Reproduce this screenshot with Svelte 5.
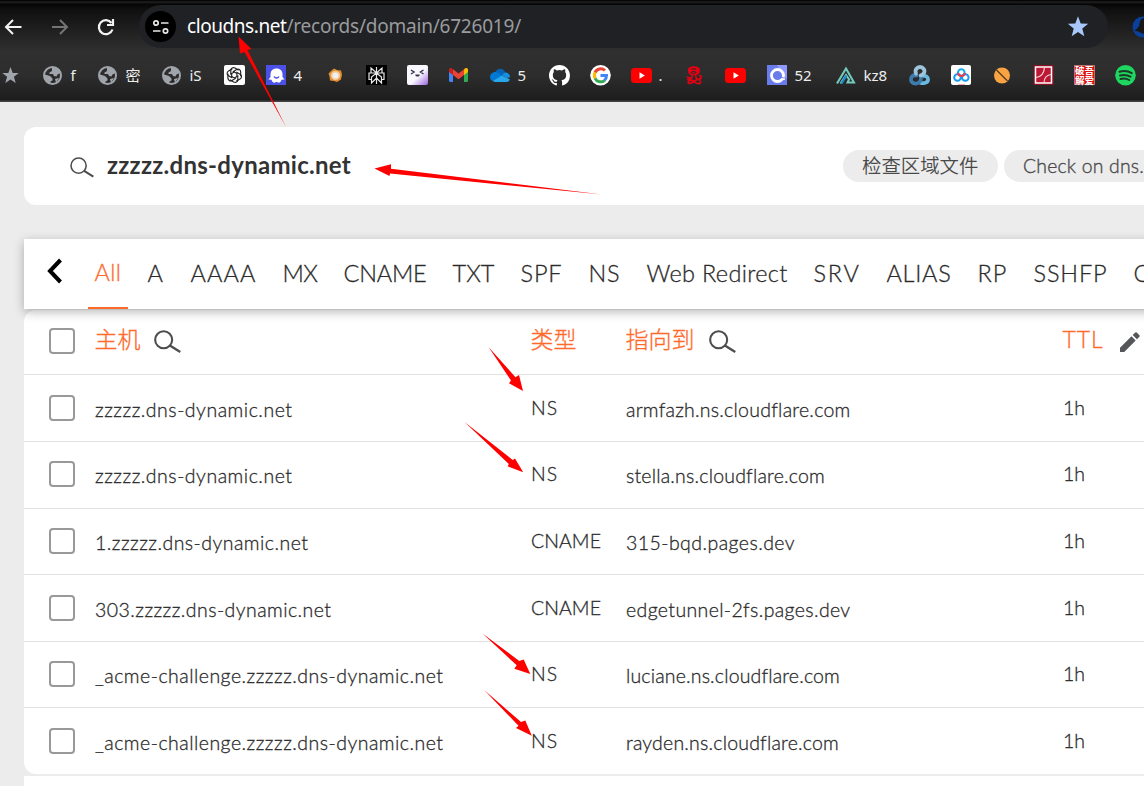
<script>
  // Spreads a label over its intended advance width through letter spacing.
  function fit(node, width) {
    const natural = node.getBoundingClientRect().width;
    const count = [...node.textContent].length;
    node.style.letterSpacing = `${(width - natural) / count}px`;
  }

  const bookmarks = [
    { icon: 'star', w: 42 },
    { icon: 'globe', w: 55, label: 'f' },
    { icon: 'globe', w: 64, label: '密' },
    { icon: 'globe', w: 62, label: 'iS' },
    { icon: 'gpt', w: 42 },
    { icon: 'ghost', w: 59, label: '4' },
    { icon: 'flower', w: 41 },
    { icon: 'weave', w: 41 },
    { icon: 'face', w: 41 },
    { icon: 'gmail', w: 42 },
    { icon: 'cloud', w: 59, label: '5' },
    { icon: 'github', w: 41 },
    { icon: 'google', w: 41 },
    { icon: 'youtube', w: 54, label: '.' },
    { icon: 'octopus', w: 40 },
    { icon: 'youtube', w: 42 },
    { icon: 'ring', w: 69, label: '52' },
    { icon: 'tri', w: 73, label: 'kz8' },
    { icon: 'knot', w: 42 },
    { icon: 'pan', w: 41 },
    { icon: 'pill', w: 41 },
    { icon: 'court', w: 41 },
    { icon: 'seal', w: 41 },
    { icon: 'spotify', w: 30 },
  ];

  const tabs = [
    ['All', 27], ['A', 17], ['AAAA', 66], ['MX', 35], ['CNAME', 83], ['TXT', 42],
    ['SPF', 42], ['NS', 32], ['Web Redirect', 141], ['SRV', 47], ['ALIAS', 65],
    ['RP', 30], ['SSHFP', 74], ['C', 17],
  ];

  const records = [
    ['zzzzz.dns-dynamic.net', 197.5, 'NS', 27, 'armfazh.ns.cloudflare.com', 224.5],
    ['zzzzz.dns-dynamic.net', 197.5, 'NS', 27, 'stella.ns.cloudflare.com', 199],
    ['1.zzzzz.dns-dynamic.net', 213.5, 'CNAME', 70, '315-bqd.pages.dev', 169],
    ['303.zzzzz.dns-dynamic.net', 236.5, 'CNAME', 70, 'edgetunnel-2fs.pages.dev', 224.5],
    ['_acme-challenge.zzzzz.dns-dynamic.net', 348.5, 'NS', 27, 'luciane.ns.cloudflare.com', 214],
    ['_acme-challenge.zzzzz.dns-dynamic.net', 348.5, 'NS', 27, 'rayden.ns.cloudflare.com', 213],
  ];

  const arrows = [
    '238.5,36.5 240,53.5 244.5,52 286,127 247.5,50 251.5,49',
    '374.5,168.5 391,164.3 391,168.7 602,194.5 390,173.6 389.5,176',
    '523,391 519,375 515.5,377.2 488.5,347 511,380.5 509,383.3',
    '523.2,472.3 515,458.5 512.7,460 464.5,422 508.8,464 507.7,466.3',
    '530.3,674 523.7,659.5 519.3,661 482.5,633.5 516.7,665.3 514.3,668.8',
    '531.8,735.7 525.3,720.5 521,722 484.2,690 518.5,725.8 516,728',
  ];
</script>

{#snippet magnifier(size)}
  <svg class="mag" width={size} height={size * 0.86} viewBox="0 0 26 22" fill="none" stroke="#4d4d4f">
    <circle cx="9.3" cy="9.2" r="8.2" stroke-width="2" />
    <path d="M15.3 14.8 25.3 21" stroke-width="2.2" />
  </svg>
{/snippet}

{#snippet glyph(name)}
  <svg class="glyph" width="20" height="20" viewBox="0 0 20 20" fill="none">
    {#if name === 'star'}
      <path fill="#a0a4ab" d="m9.500 2 2.200 6h6l-4.800 3.800 1.800 6.200-5.200-3.600L4.300 18l1.800-6.200L1.300 8h6z" />
    {:else if name === 'globe'}
      <circle cx="9.500" cy="10.500" r="8.500" stroke="#a0a4ab" stroke-width="2" />
      <path fill="#a0a4ab" d="M9 2c4 0 7 2 8.500 6l-3 1.500-1 2-2.500-.5-1-2H6.500V7.500L9 6zM2 9.500l5 1.500 2.500 2.500v2l-2 1V19C4 18 1 14 2 9.500zM12 14l4-1-3 5z" />
    {:else if name === 'gpt'}
      <rect width="21" height="20" rx="2" fill="#fff" />
      <g stroke="#222" stroke-width="1.150">
        {#each [0, 60, 120, 180, 240, 300] as a}
          <path transform="rotate({a} 10.300 10)" d="M10.300 7 6.800 9V5.300C6.800 3 9 2 11 3l3.600 2.200" />
        {/each}
      </g>
    {:else if name === 'ghost'}
      <rect width="20" height="20" fill="#4b50e6" />
      <path fill="#fff" d="M10.500 3.500c4 0 6 2.500 6 6v2.500l2 2.500-3 .2c-.5 2-1.500 3-3 3l-2-1-2 1c-1.500 0-2.500-1-3-3l-3-.2 2-2.500V9.500c0-3.500 2-6 6-6z" />
      <path stroke="#4b50e6" stroke-width="1.300" d="M8 11.500c1 2 4 2 5 0" />
    {:else if name === 'flower'}
      <path fill="#e48d2d" d="m9 3.500 3 1.500 4 .5 1 4-1 5-4 2.500-3-1-4-.5-.5-4-1-3L6 6z" />
      <circle cx="10.500" cy="10.500" r="4.700" fill="#f4c999" /><circle cx="10.500" cy="10.500" r="3" fill="#eef0f2" />
    {:else if name === 'weave'}
      <rect width="21" height="20" fill="#000" />
      <path stroke="#e8e8e8" stroke-width="1.200" d="M10.500 2v17M5 3l5.500 5L16 3v5H5zM5 8H3v6.500h2.500V12l5-4 5 4v2.500H18V8h-2M5.500 14v4l5-5 5 5v-4" />
    {:else if name === 'face'}
      <defs><linearGradient id="fg" x1="0" y1="0" x2="1" y2="1"><stop offset=".55" stop-color="#faf8ff" /><stop offset="1" stop-color="#9a64e0" /></linearGradient></defs>
      <rect width="21" height="20" rx="2" fill="url(#fg)" />
      <path stroke="#34354d" stroke-width="1.500" d="m4 5 3 2-3 2M16.500 5l-3 2 3 2M9 9.500c0 1.500 1.500 1.500 1.500 0 0 1.500 1.500 1.500 1.500 0" />
    {:else if name === 'gmail'}
      <path fill="#4285f4" d="M1 6v9.500A1.500 1.500 0 0 0 2.500 17H5V9z" /><path fill="#34a853" d="M20 6v9.500a1.500 1.500 0 0 1-1.500 1.500H16V9z" />
      <path fill="#c5221f" d="M1 7V5c0-2 2-2.500 3.500-1.300L5 4.200V10z" /><path fill="#fbbc04" d="M20 7V5c0-2-2-2.500-3.500-1.300l-.5.500V10z" />
      <path fill="#ea4335" d="m5 4.200 5.500 4.300L16 4.200V10l-5.500 4.300L5 10z" />
    {:else if name === 'cloud'}
      <path fill="#0364b8" d="M5 7.500C7 2.500 13 2.500 15 7l-3 5-8-3z" /><path fill="#0078d4" d="M4.500 7C1.500 7.500 0 9.500 0 12c0 2 1 3.200 2.500 4L13 11 8.500 8c-1.300-.8-2.600-1-4-1z" />
      <path fill="#1490df" d="M14.800 7.500c2.700-.2 5.200 1.500 5.200 4.700L17 13l-5-3z" /><path fill="#28a8ea" d="m2.500 16 9.500-5.500 8 4c-.7 1.700-2 2.500-4 2.500H5z" />
    {:else if name === 'github'}
      <g transform="scale(1.310)"><path fill="#fff" d="M8 0C3.580 0 0 3.580 0 8c0 3.540 2.290 6.530 5.470 7.590.4.070.55-.17.55-.38 0-.19-.01-.82-.01-1.490-2.010.37-2.530-.49-2.690-.94-.09-.23-.48-.94-.82-1.130-.28-.15-.68-.52-.01-.53.63-.01 1.080.58 1.230.82.72 1.210 1.870.87 2.330.66.070-.52.28-.87.51-1.070-1.780-.2-3.640-.89-3.640-3.950 0-.87.31-1.590.82-2.150-.08-.2-.36-1.020.08-2.120 0 0 .67-.21 2.200.82a7.600 7.600 0 0 1 4 0c1.530-1.040 2.200-.82 2.200-.82.44 1.100.16 1.920.08 2.120.51.56.82 1.270.82 2.150 0 3.070-1.870 3.750-3.650 3.950.29.25.54.73.54 1.480 0 1.070-.01 1.930-.01 2.200 0 .21.15.46.55.38A8.010 8.010 0 0 0 16 8c0-4.420-3.580-8-8-8z" /></g>
    {:else if name === 'google'}
      <circle cx="10.500" cy="10.300" r="10.300" fill="#fff" />
      <g stroke-width="3"><path stroke="#ea4335" d="M5 7.500a6.300 6.300 0 0 1 10-2" /><path stroke="#fbbc05" d="M5.200 13.500a6.500 6.500 0 0 1 0-6.200" /><path stroke="#34a853" d="M5 13.300a6.300 6.300 0 0 0 9.800 2" /><path stroke="#4285f4" d="M10.500 10.500h6c0 2-.7 3.500-2 4.800" /></g>
    {:else if name === 'youtube'}
      <rect y="3" width="21" height="15" rx="3.500" fill="#f00" /><path fill="#fff" d="m8.500 7.300 5.300 3.200-5.300 3.200z" />
    {:else if name === 'octopus'}
      <path fill="#e60012" d="M3 4.500C3 2.500 5 1.200 8.500 1.200s6.500 1.300 6.500 4.300-2 4-3.500 4.500h-5C4 9.500 3 8 3 6.500z" />
      <path stroke="#e60012" stroke-width="1.700" d="M7 10v2.500c0 1.500-5 0-5-1M10.500 10c0 3 1.500 5 5.500 4.500M14 10.500c3 0 3 3 0 3.500-4 .5-6 4.500-9 4.500-2 0-2.500-1.500-1-2.500 3-2 5-.5 6.500 1.500 1.500 1.500 5 1.500 5 0s-1-1.500-1-1.500M2 14.500h3l3 1" />
      <path stroke="#2c2c2c" d="M6.500 4h4.500M6 7.500c0-1.500 5-1.500 5 0-1 1-4 1-5 0" />
    {:else if name === 'ring'}
      <rect width="20" height="20" fill="#687cec" /><path fill="#8f9aff" d="M20 0v14l-6-5-4-9z" />
      <circle cx="10.500" cy="10.500" r="6" stroke="#fff" stroke-width="2.800" /><path stroke="#687cec" stroke-width="1.200" d="m13 12 5 1.500" /><path stroke="#fff" stroke-width="1.500" d="m14 14.500 4-.5" />
    {:else if name === 'tri'}
      <path stroke="#75cbbd" stroke-width="2" d="M1 18.500 10 3.500l8 14h-6.500l2-4M4.500 18.500 10 10l3.500 5" /><path stroke="#1d8bd1" stroke-width="2.300" d="m5.500 18.500 4.800-8" />
    {:else if name === 'knot'}
      <g stroke-width="3.800" stroke-linecap="round"><path stroke="#67b9df" d="M11 17.500c3 1.500 8.500.5 8-3.500-.3-2.500-2.500-3.500-5-3" /><path stroke="#3d7bad" d="M7.500 10.500C4 9.500 1.500 12 2 15c.6 4 6 4.500 8.500 2 1-1 1.500-2.500 1.500-4" /><path stroke="#9dc4dc" d="M7 8.500C5.500 5 8 2 11 2s5.500 3 4 6c-.7 1.300-2 2-3.500 2.500" /></g>
    {:else if name === 'pan'}
      <rect width="20" height="20" rx="2" fill="#fff" />
      <g stroke-width="2"><circle cx="10.300" cy="7.500" r="3.300" stroke="#14a9f2" /><circle cx="6.500" cy="12.500" r="3.300" stroke="#159bee" /><circle cx="14.300" cy="12.500" r="3.300" stroke="#159bee" /><path stroke="#f2384b" d="M7 8c.5 2 2 3 3.500 3S13.500 10 14 8" /></g>
      <path stroke="#f2a6ad" d="M7 19.500h7" />
    {:else if name === 'pill'}
      <circle cx="10" cy="10.500" r="8" fill="#f9a343" /><path stroke="#49321e" stroke-width="1.100" d="m4.500 5 11 11" />
    {:else if name === 'court'}
      <rect x=".5" width="20" height="20" fill="#8f1024" /><rect x="2.500" y="2" width="16" height="16" fill="#bd1733" stroke="#fff" stroke-width="1.500" />
      <path stroke="#f3d5da" stroke-width="1.200" d="M3 12.500c5-.5 8-4.500 8.500-10M11 18c0-5 2.500-8 7.500-8.500" />
    {:else if name === 'seal'}
      <rect x=".5" y=".5" width="20" height="19" fill="#df1010" stroke="#f5c0bd" stroke-dasharray="1 1" />
      <text><tspan x="1" y="9">破吾</tspan><tspan x="1" y="18.500">解爱</tspan></text>
    {:else if name === 'spotify'}
      <circle cx="10.500" cy="10.300" r="10.300" fill="#1ed760" />
      <path stroke="#1d3826" stroke-width="2" stroke-linecap="round" d="M4.500 6.800c4-1.200 8.500-.8 12.300 1.300M5 10.500c3.500-1 7.300-.6 10.500 1.200M5.500 14c3-.8 6-.5 8.700 1" />
    {/if}
  </svg>
{/snippet}

<div class="screen">
  <header class="browser">
    <div class="nav">
      <svg class="back" width="20" height="20" viewBox="0 0 20 20" fill="none" stroke="#f2f2f2" stroke-width="2"><path d="M19.500 10H5M11 3l-7 7 7 7" /></svg>
      <svg class="fwd" width="20" height="20" viewBox="0 0 20 20" fill="none" stroke="#747474" stroke-width="2"><path d="M2 10h14.500M10 3l7 7-7 7" /></svg>
      <svg class="reload" width="20" height="20" viewBox="0 0 20 20" fill="none" stroke="#f2f2f2" stroke-width="2.200"><path d="M16.500 12.500A7 7 0 1 1 15.500 6M17 2v6h-6" /></svg>
      <div class="omnibox">
        <div class="tune">
          <svg width="18" height="16" viewBox="0 0 18 16" fill="none" stroke="#e8e8e8" stroke-width="1.700"><circle cx="4" cy="4" r="2.200" /><path d="M9 4h7.500M1 12h7.500" /><circle cx="13.500" cy="12" r="2.200" /></svg>
        </div>
        <span class="url"><b use:fit={99.5}>cloudns.net</b><span use:fit={234.5}>/records/domain/6726019/</span></span>
        <svg class="fav" width="22" height="21" viewBox="0 0 22 21" fill="#a8c7fa"><path d="m11 .3 2.700 7.100 7.500.3-5.900 4.700 2 7.800L11 16l-6.300 4.200 2-7.800L.8 7.700l7.500-.3z" /></svg>
      </div>
      <svg class="ext" width="22" height="22" viewBox="0 0 22 22"><circle cx="11" cy="11" r="10.500" fill="#0a409b" /><path fill="#171717" d="M12 2C7 3 8 7 7 10c-1 2-4 4-4 5 4 0 5 2 9 3z" /></svg>
    </div>
    <div class="marks">
      {#each bookmarks as b}
        <div class="mark" style:width="{b.w}px">
          {@render glyph(b.icon)}
          {#if b.label}<span>{b.label}</span>{/if}
        </div>
      {/each}
    </div>
  </header>

  <main>
    <section class="zone">
      {@render magnifier(24)}
      <h1><span use:fit={244}>zzzzz.dns-dynamic.net</span></h1>
      <span class="chip cjk">检查区域文件</span>
      <span class="chip en"><span use:fit={121}>Check on dns.</span></span>
    </section>

    <nav class="tabs">
      <svg class="prev" width="16" height="26" viewBox="0 0 16 26" fill="none" stroke="#000" stroke-width="4"><path d="M13.500 2 3 13l10.500 11" /></svg>
      {#each tabs as [name, w], i}
        <div class="tab" class:active={i === 0} style:width="{w + 13}px"><span use:fit={w}>{name}</span></div>
      {/each}
    </nav>

    <section class="table">
      <div class="row head">
        <i class="box"></i>
        <div>主机{@render magnifier(27)}</div>
        <div>类型</div>
        <div class="target">指向到{@render magnifier(27)}</div>
        <div class="ttl"><span use:fit={41}>TTL</span>
          <svg width="20" height="20" viewBox="0 0 20 20" fill="#55565a"><path d="M0 15.800 11.500 4.300l4.200 4.200L4.200 20H0zM12.700 3.100 15.300.6q.7-.7 1.400 0l2.700 2.700q.7.700 0 1.400l-2.500 2.600z" /></svg>
        </div>
      </div>
      {#each records as [host, hw, type, tw, target, gw]}
        <div class="row">
          <i class="box"></i>
          <div class="low"><span use:fit={hw}>{host}</span></div>
          <div><span use:fit={tw}>{type}</span></div>
          <div class="low"><span use:fit={gw}>{target}</span></div>
          <div class="time"><span use:fit={22}>1h</span></div>
        </div>
      {/each}
    </section>
    <div class="next"></div>
  </main>

  <svg class="arrows" width="1144" height="786" viewBox="0 0 1144 786" fill="#f00">
    {#each arrows as points}<polygon {points} />{/each}
  </svg>
</div>

<style>
  :global(body) { margin: 0; overflow: hidden; }
  .screen {
    position: relative; width: 1144px; height: 786px; overflow: hidden;
    background: #ececec; color: #2b2b2b; font-family: Lato, "Noto Sans CJK SC", sans-serif;
    font-weight: 300; display: flex; flex-direction: column;
  }
  svg { flex: none; display: block; }
  span { white-space: nowrap; }
  .browser {
    box-sizing: border-box; height: 102px; flex: none; padding-top: 5px; overflow: hidden;
    background: linear-gradient(#050505 0 1px, #191919 1px 3px, #050505 4px, #101010 10px, #303030 52px, #2d2d2d 75px, #1d1d1d 100px, #444 101px);
    font-family: "Noto Sans", "Noto Sans CJK SC", sans-serif; font-weight: 400;
  }
  .nav { height: 43px; display: flex; align-items: center; }
  .back { margin-left: 2px; }
  .fwd { margin-left: 28px; }
  .reload { margin-left: 26px; }
  .omnibox {
    box-sizing: border-box; flex: none; width: 969px; height: 43px; margin-left: 23px; padding: 0 19px 0 6px;
    border-radius: 22px; background: #202124; display: flex; align-items: center;
  }
  .tune { width: 31px; height: 31px; border-radius: 50%; background: #000; display: grid; place-items: center; }
  .url { flex: 1; margin: -2px 0 0 11px; font-size: 19px; color: #999b9e; display: flex; }
  .url b { font-weight: 400; color: #fff; }
  .ext { margin-left: 24px; }
  .marks { display: flex; height: 53px; align-items: center; padding-left: 1px; }
  .mark { flex: none; display: flex; align-items: center; gap: 7.500px; color: #eee; font-size: 15px; }
  .glyph { overflow: visible; }
  .glyph text { font: 700 9.500px "Noto Sans CJK SC", sans-serif; fill: #fff; }
  main { flex: 1; padding: 25px 0 0 24px; }
  .zone {
    box-sizing: border-box; width: 1180px; height: 78px; padding-left: 45.500px; border-radius: 12px;
    background: #fff; display: flex; align-items: center;
  }
  .zone .mag { margin-top: 3px; }
  .zone :global(circle) { stroke-width: 1.700; }
  h1 { margin: 0 0 2px 13.500px; width: 736px; flex: none; font-size: 24px; line-height: 30px; font-weight: 700; color: #333; }
  .chip {
    box-sizing: border-box; flex: none; height: 32px; padding: 0 19px; margin-right: 6px; border-radius: 16px;
    background: #ececec; color: #4a4a4a; font-size: 19.400px; line-height: 32px; width: 155px;
  }
  .chip.cjk { font-weight: 350; }
  .chip.en { width: 190px; -webkit-text-stroke: .35px; }
  .tabs {
    position: relative; z-index: 1; height: 70px; width: 1200px; margin-top: 34px; background: #fff;
    box-shadow: 0 3px 10px rgba(0, 0, 0, .28); display: flex; gap: 13px;
  }
  .prev { margin: 19px 24px 0 23px; }
  .tab {
    box-sizing: border-box; flex: none; height: 70px; padding-left: 6.500px; line-height: 69px;
    font-size: 23.500px; -webkit-text-stroke: .3px;
  }
  .tabs .prev + .tab { margin-left: -12px; }
  .active { color: #ff6a2b; border-bottom: 2px solid #ff6a2b; line-height: 67px; }
  .table { width: 1200px; height: 464px; margin-top: 1px; border-radius: 12px; background: #fff; }
  .row {
    box-sizing: border-box; height: 66.600px; display: grid; grid-template-columns: 46px 436px 95px 437px 1fr;
    align-items: center; padding: 0 0 1.800px 25px; border-top: 1px solid #e2e2e2; font-size: 19.500px;
    -webkit-text-stroke: .3px;
  }
  .head { height: 64.400px; border: 0; color: #ff6a2b; font-size: 23px; padding-bottom: 2px; }
  .head > div { display: flex; align-items: center; gap: 13px; line-height: 30px; margin: -4px 0 0 -.5px; }
  .head .target { gap: 14px; }
  .head .mag { margin-top: 5px; }
  .head .ttl { gap: 16px; }
  .ttl svg { margin-top: 5px; }
  .box { box-sizing: border-box; width: 26px; height: 26px; border: 2px solid #999; border-radius: 4px; }
  .row:not(.head) .box { margin-top: 1px; }
  .low { padding-top: 4px; }
  .next { height: 20px; margin-top: 2px; background: #fff; }
  .arrows { position: absolute; inset: 0; }
</style>
